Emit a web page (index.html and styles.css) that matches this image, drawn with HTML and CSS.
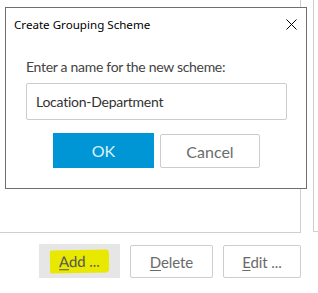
FILE: index.html
```html
<!DOCTYPE html>
<html lang="en">
<head>
    <meta charset="UTF-8">
    <title>Create Grouping Scheme</title>
    <link rel="stylesheet" href="styles.css">
</head>
<body>
    <div class="screen">
        <!-- Списки схем за диалогом -->
        <div class="lists">
            <div class="list"></div>
            <div class="side"></div>
        </div>

        <div class="actions">
            <button class="btn btn-add"><span class="mark"><u>A</u>dd ...</span></button>
            <button class="btn btn-delete"><u>D</u>elete</button>
            <button class="btn btn-edit"><u>E</u>dit ...</button>
        </div>

        <!-- Модальный диалог поверх -->
        <div class="dialog">
            <div class="dialog-head">
                <span class="dialog-title">Create Grouping Scheme</span>
                <button class="close" aria-label="Close">
                    <svg width="11" height="11" viewBox="0 0 11 11">
                        <path d="M0.5 0.5 L10.5 10.5 M10.5 0.5 L0.5 10.5" stroke="#000" stroke-width="1" fill="none"/>
                    </svg>
                </button>
            </div>
            <div class="dialog-body">
                <label for="schemeName">Enter a name for the new scheme:</label>
                <input type="text" id="schemeName" value="Location-Department">
                <div class="dialog-buttons">
                    <button class="ok">OK</button>
                    <button class="cancel">Cancel</button>
                </div>
            </div>
        </div>
    </div>
</body>
</html>
```

FILE: styles.css
```css
body {
    margin: 0;
    background-color: #fff;
    font-family: Lato, sans-serif;
}

.screen {
    position: relative;
    width: 318px;
    height: 293px;
    overflow: hidden;
}

/* Списки */
.lists {
    display: flex;
}

.list {
    width: 300px;
    height: 232px;
    border-right: 1px solid #cfcfcf;
    border-bottom: 1px solid #cfcfcf;
}

.side {
    flex: 1;
    margin-left: 12px;
    height: 231px;
    border-left: 1px solid #cfcfcf;
    border-bottom: 1px solid #cfcfcf;
}

/* Кнопки под списком */
.actions {
    display: flex;
    align-items: flex-start;
    gap: 10px;
    margin-top: 11px;
    padding-left: 39px;
}

.btn {
    height: 33px;
    margin-top: 1px;
    padding: 0;
    background-color: #fff;
    border: 1px solid #cdcdcd;
    border-radius: 2px;
    font-family: Lato, sans-serif;
    font-size: 15px;
    letter-spacing: -0.1px;
    color: #6a6a6a;
}

.btn u {
    text-underline-offset: 2px;
}

.btn-add {
    width: 81px;
    height: 34px;
    margin-top: 0;
    border: none;
    border-radius: 0;
    background-color: #e6e6e6;
    color: #555;
}

.btn-delete {
    width: 83px;
}

.btn-edit {
    width: 78px;
}

/* Жёлтый маркер поверх надписи */
.mark {
    display: inline-block;
    padding: 2px 9px 3px 9px;
    background-color: #e8e800;
    border-radius: 2px 3px 4px 1px;
    transform: rotate(-1deg);
}

/* Диалог */
.dialog {
    position: absolute;
    left: 5px;
    top: 7px;
    width: 302px;
    height: 182px;
    box-sizing: border-box;
    background-color: #fff;
    border: 1px solid #6f6f6f;
}

.dialog-head {
    display: flex;
    justify-content: space-between;
    align-items: center;
    height: 32px;
    padding: 0 9px 0 8px;
}

.dialog-title {
    font-family: "Noto Sans", sans-serif;
    font-size: 11.6px;
    color: #000;
}

.close {
    padding: 0;
    border: none;
    background: none;
    display: flex;
}

.dialog-body {
    padding: 17px 18px 0 20px;
}

.dialog-body label {
    display: block;
    font-size: 14px;
    letter-spacing: -0.3px;
    color: #444;
    line-height: 20px;
}

.dialog-body input {
    display: block;
    width: 261px;
    height: 37px;
    margin-top: 6px;
    padding: 0 9px;
    box-sizing: border-box;
    border: 1px solid #cccccc;
    border-radius: 2px;
    font-family: Lato, sans-serif;
    font-size: 14px;
    letter-spacing: -0.25px;
    color: #333;
}

.dialog-buttons {
    display: flex;
    align-items: flex-start;
    gap: 6px;
    margin-top: 13px;
    padding-left: 27px;
}

.ok {
    width: 101px;
    height: 35px;
    border: none;
    background-color: #0096d6;
    color: #dff1fa;
    font-family: Lato, sans-serif;
    font-size: 16px;
}

.cancel {
    width: 100px;
    height: 34px;
    margin-top: 1px;
    background-color: #fff;
    border: 1px solid #cccccc;
    border-radius: 2px;
    color: #6b6b6b;
    font-family: Lato, sans-serif;
    font-size: 16px;
}
```
